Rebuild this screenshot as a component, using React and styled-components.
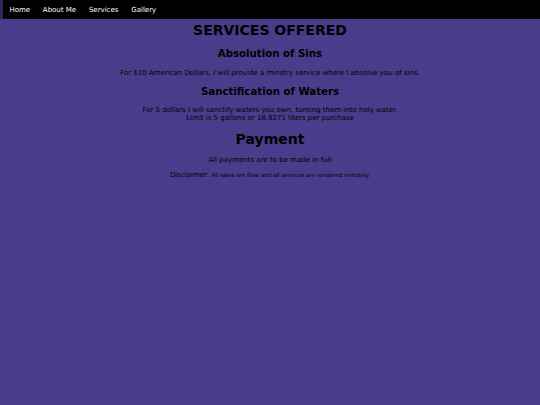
import React from "react";
import styled, { createGlobalStyle } from "styled-components";

const Global = createGlobalStyle`
  html, body {
    margin: 0;
    padding: 0;
    background-color: #483d8b;
    font-family: "DejaVu Sans", Verdana, sans-serif;
  }
`;

const Page = styled.div`
  min-height: 405px;
`;

const NavWrap = styled.div`
  background-color: #2e2862;
  padding-left: 3px;
`;

const Nav = styled.ul`
  display: flex;
  margin: 0;
  padding: 0;
  list-style: none;
  background-color: #000;
  height: 19px;
  align-items: center;
`;

const NavItem = styled.li`
  color: #fff;
  font-size: 7px;
  padding: 0 6.4px;
`;

const Content = styled.div`
  display: flex;
  flex-direction: column;
  align-items: center;
  text-align: center;
  color: #000;
  padding-top: 3px;
`;

const Title = styled.h1`
  font-size: 14px;
  margin: ${(p) => p.$top || 0}px 0 0;
  line-height: 17px;
`;

const Heading = styled.h2`
  font-size: 10.2px;
  margin: 8px 0 0;
  line-height: 13px;
`;

const Text = styled.p`
  font-size: 7px;
  margin: 8.5px 0 0;
  line-height: 8px;
`;

const Disclaimer = styled.div`
  font-size: 7px;
  margin-top: 6.5px;
  line-height: 9px;
`;

const Small = styled.span`
  font-size: 5.6px;
`;

export default function App() {
  return (
    <Page>
      <Global />
      <NavWrap>
        <Nav>
          {["Home", "About Me", "Services", "Gallery"].map((n) => (
            <NavItem key={n}>{n}</NavItem>
          ))}
        </Nav>
      </NavWrap>
      <Content>
        <Title>SERVICES OFFERED</Title>
        <Heading>Absolution of Sins</Heading>
        <Text>
          For $10 American Dollars, I will provide a minstry service where I
          absolve you of sins.
        </Text>
        <Heading>Sanctification of Waters</Heading>
        <Text>
          For 5 dollars I will sanctify waters you own, turning them into holy
          water.
          <br />
          Limit is 5 gallons or 18.9271 liters per purchase
        </Text>
        <Title $top={8.5}>Payment</Title>
        <Text>All payments are to be made in full</Text>
        <Disclaimer>
          Disclaimer: <Small>All sales are final and all services are rendered remotely.</Small>
        </Disclaimer>
      </Content>
    </Page>
  );
}
